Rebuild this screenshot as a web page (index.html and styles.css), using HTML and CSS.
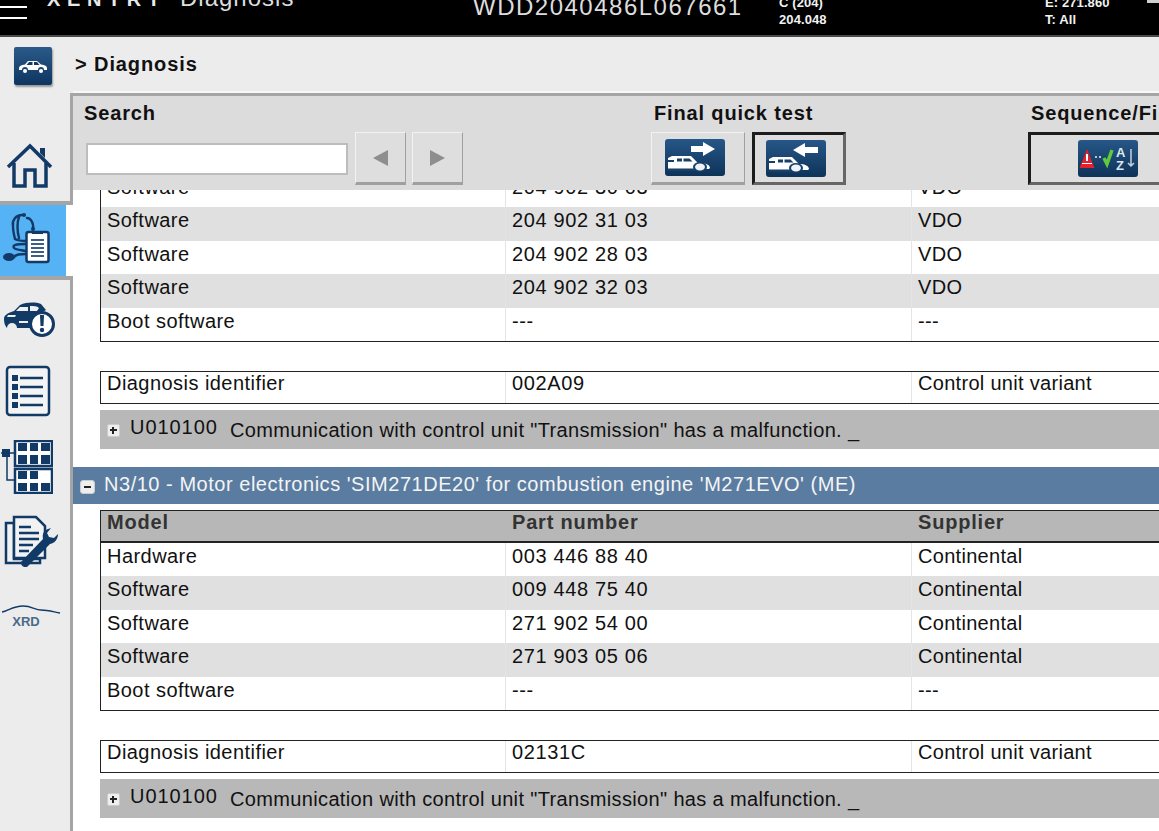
FILE: index.html
```html
<!DOCTYPE html>
<html lang="en">
<head>
<meta charset="utf-8">
<title>XENTRY Diagnosis</title>
<link rel="stylesheet" href="styles.css">
</head>
<body>
<header class="topbar">
  <div class="burger"><span></span><span></span></div>
  <div class="brand">XENTRY</div>
  <div class="app">Diagnosis</div>
  <div class="vin">WDD2040486L067661</div>
  <div class="info info-c"><div>C (204)</div><div>204.048</div></div>
  <div class="info info-e"><div>E: 271.860</div><div>T: All</div></div>
  <i class="corner"></i>
</header>
<div class="workspace">
  <aside class="rail">
    <div class="rail-top">
      <div class="car-tile">
        <svg viewBox="0 0 38 38" width="38" height="38"><path fill="#fff" d="M5 21c0-2 2-3 6-3.500l3-3.500h9l4 3.500c4 .5 6 1.500 6 3.500v2h-3a3 3 0 0 0-6 0H14a3 3 0 0 0-6 0H5z"/><circle cx="11" cy="24" r="2" fill="#fff"/><circle cx="27" cy="24" r="2" fill="#fff"/><path fill="#123a66" d="M15 15h3.500v3H12.500zM20 15h3l2.500 3H20z"/></svg>
      </div>
      <svg class="home" viewBox="0 0 48 46" width="48" height="46"><path fill="none" stroke="#123a66" stroke-width="3.500" d="M2 24 24 3l21 21"/><path fill="none" stroke="#123a66" stroke-width="3.500" d="M8 20v23h11V27h10v16h11V20"/><path fill="#123a66" d="M34 5h5v10l-5-5z"/></svg>
    </div>
    <div class="rail-active">
      <svg viewBox="0 0 66 70" width="66" height="70"><g fill="none" stroke="#123a66" stroke-width="2.400" stroke-linecap="round"><path d="M33 24c1-7-3-11-6-11"/><path d="M22 10c-6 0-10 5-9 11 0 5 1 9 2 13"/><path d="M19 12c-2 5-2 14 0 21"/><path d="M15 34c4 2 8 2 11 2"/><path d="M26 39c-10 0-14 1-12 4 2 2 8 2 12 3"/><path d="M26 49c-6 0-10 0-12 3"/></g><circle cx="24" cy="10" r="2" fill="#123a66"/><circle cx="33" cy="24" r="2" fill="#123a66"/><ellipse cx="9" cy="52" rx="6" ry="4" fill="#123a66"/><rect x="26.500" y="27" width="22" height="30" rx="2" fill="#fff" stroke="#123a66" stroke-width="2.500"/><rect x="32" y="26" width="11" height="3" fill="#123a66"/><path stroke="#3d5f85" stroke-width="2" d="M31 35h13M31 39h13M31 43h13M31 47h13M31 51h13"/></svg>
    </div>
    <div class="rail-rest">
      <svg class="ico ico-car" viewBox="0 0 52 38" width="52" height="38"><path fill="#123a66" d="M1 19c0-4 4-6 10-8l6-6c7-3 15-3 21-1l5 6-5 3c-6 2-9 7-9 15H14a5 5 0 0 0-10 0c-2-2-3-5-3-9z"/><path fill="#f0f0f0" d="M17 7h8v4H13zM27 6c4 0 7 0 9 2l-2 3h-7z"/><path fill="#f0f0f0" d="M5 15h8l-1 2H4zM16 21h9v2h-9z"/><circle cx="39" cy="24" r="11.500" fill="#fff" stroke="#123a66" stroke-width="3"/><path fill="#123a66" d="M37 15h4l-.5 11h-3z"/><circle cx="39" cy="30" r="2.200" fill="#123a66"/></svg>
      <svg class="ico ico-list" viewBox="0 0 46 52" width="46" height="52"><rect x="2" y="2" width="42" height="48" rx="3" fill="#f4f4f4" stroke="#123a66" stroke-width="2.500"/><g fill="#123a66"><rect x="7" y="10" width="6" height="6"/><rect x="7" y="19" width="6" height="6"/><rect x="7" y="28" width="6" height="6"/><rect x="7" y="37" width="6" height="6"/></g><path stroke="#123a66" stroke-width="2.500" d="M15 13h23M15 22h23M15 31h23M15 40h23"/></svg>
      <svg class="ico ico-units" viewBox="0 0 52 54" width="52" height="54"><rect x="1" y="9" width="8" height="8" fill="#123a66"/><path stroke="#123a66" stroke-width="1.500" fill="none" d="M0 13h14M6 17v23h8"/><g fill="#fff" stroke="#123a66" stroke-width="2.500"><rect x="14" y="1" width="37" height="25"/><rect x="14" y="29" width="37" height="24"/></g><g fill="#123a66"><rect x="17" y="3" width="9" height="8"/><rect x="29" y="3" width="8" height="8"/><rect x="40" y="3" width="9" height="8"/><rect x="17" y="15" width="9" height="9"/><rect x="29" y="15" width="8" height="9"/><rect x="40" y="15" width="9" height="9"/><rect x="17" y="31" width="9" height="8"/><rect x="29" y="31" width="8" height="8"/><rect x="17" y="43" width="9" height="8"/><rect x="29" y="43" width="8" height="8"/><rect x="40" y="43" width="9" height="8"/></g></svg>
      <svg class="ico ico-tool" viewBox="0 0 56 52" width="56" height="52"><path fill="#f2f2f2" stroke="#123a66" stroke-width="2.500" d="M3 8h8v36h26v4H3z"/><path fill="#f2f2f2" stroke="#123a66" stroke-width="2.500" d="M11 2h22l9 9v32H11z"/><path stroke="#123a66" stroke-width="2.500" d="M16 12h12M16 18h20M16 24h20M16 30h14M16 36h10"/><path fill="#123a66" d="M18 47l22-23c-1-5 1-9 5-10l3-1-4 5 2 4 5 1 4-4c0 5-3 9-8 10L24 52c-3 1-7-2-6-5z"/></svg>
      <div class="xrd">
        <svg viewBox="0 0 60 12" width="60" height="12"><path fill="none" stroke="#123a66" stroke-width="1.300" d="M1 9c6-1 11-6 21-6 9 0 12 4 18 4 7 0 13 2 19 3"/></svg>
        <span>XRD</span>
      </div>
    </div>
  </aside>
  <div class="stage">
    <div class="crumb">&gt; Diagnosis</div>
    <main class="panel">
      <section class="toolbar">
        <div class="tool-search">
          <div class="tool-label">Search</div>
          <div class="search-row">
            <div class="search-input"></div>
            <div class="btn btn-nav"><span class="tri tri-l"></span></div>
            <div class="btn btn-nav"><span class="tri tri-r"></span></div>
          </div>
        </div>
        <div class="tool-quick">
          <div class="tool-label">Final quick test</div>
          <div class="btn-row">
            <div class="btn btn-big"><svg class="tile" viewBox="0 0 60 37" width="60" height="37"><path fill="#fff" d="M26 7h12V3l12 7-12 7v-4H26z"/><path fill="#fff" d="M3 19l4-2h19l7 7c6 0 12 1 12 5l-1 1H3z"/><path fill="#16406b" d="M3 21h6v2H3zM12 19.500h5v3h-5zM18.500 19.500h6l3 3H18.500zM3 29.500h32V32H3z"/><ellipse cx="35" cy="28" rx="7" ry="5" fill="#16406b"/><ellipse cx="35" cy="28" rx="5" ry="3.500" fill="#f0f3f6"/></svg></div>
            <div class="btn btn-big btn-on"><svg class="tile" viewBox="0 0 60 37" width="60" height="37"><path fill="#fff" d="M52 7H39V3l-12 7 12 7v-4h13z"/><path fill="#fff" d="M3 19l4-2h19l7 7c6 0 10 2 10 5l-1 1H3z"/><path fill="#16406b" d="M3 21h6v2H3zM12 19.500h5v3h-5zM18.500 19.500h6l3 3H18.500zM3 29.500h32V32H3z"/><ellipse cx="30" cy="28" rx="7" ry="5" fill="#16406b"/><ellipse cx="30" cy="28" rx="5" ry="3.500" fill="#f0f3f6"/></svg></div>
          </div>
        </div>
        <div class="tool-seq">
          <div class="tool-label">Sequence/Filter</div>
          <div class="btn btn-seq">
            <svg class="tile" viewBox="0 0 60 37" width="60" height="37"><path fill="#e3202c" d="M1.500 28 9 9l7.500 19z"/><rect x="8" y="14" width="2" height="7" fill="#fff"/><rect x="4" y="23" width="10" height="1" fill="#fff"/><path stroke="#e8eef3" stroke-width="1.500" stroke-dasharray="2 2" d="M17 17h8"/><path fill="none" stroke="#62c93f" stroke-width="3.500" d="M26 18l3 6 5-14"/><text x="38" y="17" class="az">A</text><text x="38" y="30" class="az">Z</text><path stroke="#c5d2dd" stroke-width="1.500" fill="none" d="M53 9v17m-3-3 3 3 3-3"/></svg>
          </div>
        </div>
      </section>
      <div class="scroll">
        <section class="cu cu-first">
          <div class="tbl">
            <div class="row"><span>Software</span><span>204 902 30 03</span><span>VDO</span></div>
            <div class="row alt"><span>Software</span><span>204 902 31 03</span><span>VDO</span></div>
            <div class="row"><span>Software</span><span>204 902 28 03</span><span>VDO</span></div>
            <div class="row alt"><span>Software</span><span>204 902 32 03</span><span>VDO</span></div>
            <div class="row"><span>Boot software</span><span>---</span><span>---</span></div>
          </div>
          <div class="tbl tbl-id">
            <div class="row"><span>Diagnosis identifier</span><span>002A09</span><span>Control unit variant</span></div>
          </div>
          <div class="fault"><i class="pm"></i><b class="code">U010100</b><span class="msg">Communication with control unit "Transmission" has a malfunction. _</span></div>
        </section>
        <div class="cu-head"><i class="pm pm-minus"></i><span>N3/10 - Motor electronics 'SIM271DE20' for combustion engine 'M271EVO' (ME)</span></div>
        <section class="cu">
          <div class="tbl">
            <div class="row head"><span>Model</span><span>Part number</span><span>Supplier</span></div>
            <div class="row"><span>Hardware</span><span>003 446 88 40</span><span>Continental</span></div>
            <div class="row alt"><span>Software</span><span>009 448 75 40</span><span>Continental</span></div>
            <div class="row"><span>Software</span><span>271 902 54 00</span><span>Continental</span></div>
            <div class="row alt"><span>Software</span><span>271 903 05 06</span><span>Continental</span></div>
            <div class="row"><span>Boot software</span><span>---</span><span>---</span></div>
          </div>
          <div class="tbl tbl-id">
            <div class="row"><span>Diagnosis identifier</span><span>02131C</span><span>Control unit variant</span></div>
          </div>
          <div class="fault"><i class="pm"></i><b class="code">U010100</b><span class="msg">Communication with control unit "Transmission" has a malfunction. _</span></div>
        </section>
      </div>
    </main>
  </div>
</div>
</body>
</html>
```

FILE: styles.css
```css
* { box-sizing: border-box; }
html, body { margin: 0; height: 831px; overflow: hidden; }
body { width: 1159px; background: #ececec; font-family: "Liberation Sans", Arial, sans-serif; color: #111; display: flex; flex-direction: column; }

.topbar { height: 37px; flex: none; background: #000; border-bottom: 2px solid #4a4a4a; color: #f2f2f2; display: flex; position: relative; overflow: hidden; }
.burger { width: 27px; margin-top: 6px; flex: none; }
.burger span { display: block; height: 2px; background: #fff; margin-bottom: 9px; }
.brand { margin: -15px 0 0 20px; width: 133px; flex: none; font-size: 20px; font-weight: bold; line-height: 28px; letter-spacing: 6.600px; color: #e8e8e8; }
.app { width: 293px; flex: none; font-size: 24px; line-height: 28px; margin-top: -16px; letter-spacing: 1px; color: #ddd; }
.vin { width: 306px; flex: none; font-size: 24px; line-height: 28px; margin-top: -7px; letter-spacing: 1.500px; color: #ddd; }
.info { font-size: 13px; font-weight: bold; line-height: 17px; margin-top: -6px; flex: none; letter-spacing: .1px; }
.info-c { width: 266px; }
.corner { position: absolute; right: 0; top: 0; width: 12px; height: 3px; background: #cfcfcf; }

.workspace { flex: 1; display: flex; min-height: 0; }
.rail { width: 70px; flex: none; display: flex; flex-direction: column; background: #fff; position: relative; z-index: 2; }
.rail-top { height: 168px; width: 73px; flex: none; background: linear-gradient(#a5a5a5, #a5a5a5) right 56px / 3px 100% no-repeat #ececec; border-bottom: 4px solid #a5a5a5; padding: 10px 0 0 14px; }
.car-tile { width: 38px; height: 38px; border-radius: 2px; background: linear-gradient(#2a5a8a, #0f3560); box-shadow: 1px 2px 2px #999; }
.home { display: block; margin: 58px 0 0 -8px; }
.rail-active { height: 71px; width: 66px; flex: none; background: #55b2f5; }
.rail-active svg { display: block; }
.rail-rest { flex: 1; width: 73px; background: #ececec; border-top: 4px solid #a5a5a5; border-right: 3px solid #a5a5a5; display: flex; flex-direction: column; align-items: flex-start; }
.ico { display: block; flex: none; }
.ico-car { margin: 20px 0 0 3px; }
.ico-list { margin: 27px 0 0 5px; }
.ico-units { margin: 23px 0 0 1px; }
.ico-tool { margin: 21px 0 0 3px; }
.xrd { margin: 36px 0 0 1px; display: flex; flex-direction: column; align-items: center; width: 60px; }
.xrd svg { display: block; }
.xrd span { font-size: 13px; line-height: 11px; margin: 1px 10px 0 0; color: #4a6a8a; font-weight: bold; }

.stage { flex: 1; min-width: 0; display: flex; flex-direction: column; }
.crumb { height: 56px; flex: none; padding: 14px 0 0 5px; font-size: 20px; line-height: 26px; font-weight: bold; letter-spacing: .9px; color: #111; border-bottom: 2px solid #f8f8f8; }
.panel { flex: 1; min-height: 0; background: #fff; display: flex; flex-direction: column; overflow: hidden; }
.toolbar { height: 97px; flex: none; background: #dcdcdc; border-top: 3px solid #a5a5a5; display: flex; padding: 0 0 0 14px; position: relative; z-index: 1; }
.tool-label { font-size: 20px; font-weight: bold; line-height: 26px; letter-spacing: .85px; white-space: nowrap; margin-top: 4px; }
.tool-search { width: 570px; flex: none; }
.search-row { display: flex; gap: 6px; margin-top: 6px; }
.search-input { width: 262px; height: 32px; margin: 11px 1px 0 2px; background: #fff; border: 2px solid #bdbdbd; }
.btn { background: #dedede; border: 1px solid #f2f2f2; border-right-color: #a0a0a0; border-bottom: 3px solid #a0a0a0; display: flex; align-items: center; flex: none; }
.btn-nav { width: 51px; height: 53px; justify-content: center; }
.tri { width: 0; height: 0; border-style: solid; border-width: 8px 0; border-color: transparent; }
.tri-l { border-right: 15px solid #8e8e8e; }
.tri-r { border-left: 15px solid #8e8e8e; }
.tool-quick { width: 377px; flex: none; }
.btn-row { display: flex; gap: 7px; margin-top: 6px; margin-left: -3px; }
.btn-big { width: 94px; height: 53px; padding-left: 13px; }
.btn-on { border: 3px solid #1d1d1d; border-right-color: #666; border-bottom-color: #666; padding-left: 11px; }
.tool-seq { flex: none; width: 140px; }
.btn-seq { width: 200px; height: 53px; margin-top: 6px; margin-left: -3px; border: 3px solid #1d1d1d; border-right-color: #666; border-bottom-color: #666; padding-left: 47px; }
.tile { display: block; border-radius: 3px; background: linear-gradient(#265788, #0e3358); }
.az { font-size: 13px; font-weight: bold; fill: #dfe7ee; font-family: "Liberation Sans", sans-serif; }

.scroll { flex: 1; min-height: 0; overflow: hidden; }
.cu { padding: 6px 0 0 30px; }
.cu-first { margin-top: -16px; padding-top: 0; padding-bottom: 18px; }
.cu:last-child { padding-bottom: 0; }
.tbl { border: 1px solid #222; border-top: 0; border-right: 0; background: #fff; }
.row { height: 33.400px; display: grid; grid-template-columns: 404px 406px 1fr; font-size: 20px; line-height: 27px; letter-spacing: .45px; white-space: nowrap; }
.row span { padding-left: 6px; border-left: 1px solid #e4e4e4; }
.row span:first-child { border-left: 0; }
.row span:nth-child(2) { letter-spacing: .65px; }
.row span:nth-child(3) { letter-spacing: .3px; }
.alt { background: #e0e0e0; }
.head { height: 33px; background: #b7b7b7; font-weight: bold; line-height: 23px; color: #333; border-top: 1px solid #222; border-bottom: 2px solid #222; }
.head span, .head span:nth-child(2), .head span:nth-child(3) { border-left-color: transparent; letter-spacing: .8px; }
.tbl-id { margin-top: 29px; height: 33px; border-top: 1px solid #222; }
.tbl-id .row { height: 31px; line-height: 23px; }
.fault { margin-top: 6px; height: 39px; background: #b8b8b8; display: flex; align-items: center; padding-left: 7px; font-size: 20px; letter-spacing: .35px; white-space: nowrap; }
.pm { width: 13px; height: 13px; flex: none; background: #eee; border: 1px solid #ccc; border-radius: 2px; position: relative; margin-top: 2px; }
.pm::before { content: ""; position: absolute; left: 2px; right: 2px; top: 4px; height: 2px; background: #222; }
.pm::after { content: ""; position: absolute; top: 2px; bottom: 2px; left: 4px; width: 2px; background: #222; }
.pm-minus::after { display: none; }
.code { font-weight: normal; margin-left: 10px; width: 100px; flex: none; margin-top: -3px; letter-spacing: .95px; }
.msg { margin-top: 2px; }
.cu-head { height: 37px; background: #5b7ca1; color: #f4f4f4; display: flex; align-items: center; padding: 0 0 2px 10px; font-size: 20px; letter-spacing: .53px; white-space: nowrap; }
.cu-head .pm { margin-right: 9px; margin-top: 5px; width: 15px; height: 14px; border-radius: 3px; }
.cu-head .pm::before { left: 3px; right: 3px; top: 5px; }
```
